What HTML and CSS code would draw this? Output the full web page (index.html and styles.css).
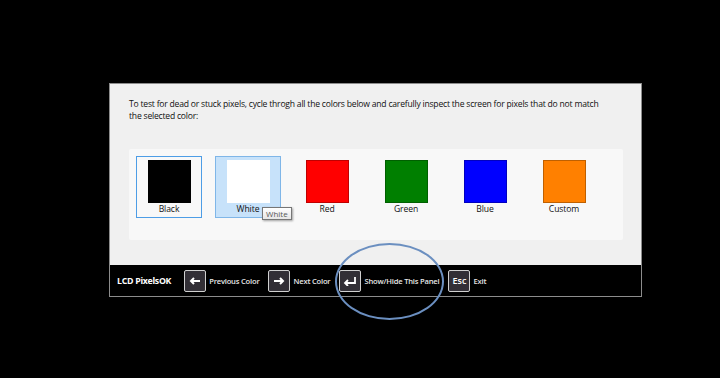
FILE: index.html
```html
<!DOCTYPE html>
<html>
<head>
    <meta charset="utf-8">
    <title>LCD PixelsOK</title>
    <link rel="stylesheet" href="styles.css">
</head>
<body>
    <div class="panel">
        <div class="content">
            <p class="intro">To test for dead or stuck pixels, cycle throgh all the colors below and carefully inspect the screen for pixels that do not match<br>the selected color:</p>
            <div class="colors">
                <div class="tile selected">
                    <div class="swatch" style="background: #000000;"></div>
                    <span>Black</span>
                </div>
                <div class="tile hover">
                    <div class="swatch" style="background: #ffffff; border-color: #ffffff;"></div>
                    <span>White</span>
                    <div class="tooltip">White</div>
                </div>
                <div class="tile">
                    <div class="swatch" style="background: #ff0000;"></div>
                    <span>Red</span>
                </div>
                <div class="tile">
                    <div class="swatch" style="background: #007f00;"></div>
                    <span>Green</span>
                </div>
                <div class="tile">
                    <div class="swatch" style="background: #0000ff;"></div>
                    <span>Blue</span>
                </div>
                <div class="tile">
                    <div class="swatch" style="background: #ff8000;"></div>
                    <span>Custom</span>
                </div>
            </div>
        </div>
        <div class="bar">
            <strong class="title">LCD PixelsOK</strong>
            <span class="key">
                <svg width="12" height="8" viewBox="0 0 12 8"><path d="M2 4 H11 M5 1 L2 4 L5 7" fill="none" stroke="#fff" stroke-width="2"/></svg>
            </span><span class="label">Previous Color</span>
            <span class="key">
                <svg width="12" height="8" viewBox="0 0 12 8"><path d="M1 4 H10 M7 1 L10 4 L7 7" fill="none" stroke="#fff" stroke-width="2"/></svg>
            </span><span class="label">Next Color</span>
            <span class="key">
                <svg width="14" height="10" viewBox="0 0 14 10"><path d="M12 1 V7 H2 M5 4 L2 7 L5 10" fill="none" stroke="#fff" stroke-width="1.8"/></svg>
            </span><span class="label">Show/Hide This Panel</span>
            <span class="key esc">Esc</span><span class="label">Exit</span>
        </div>
    </div>
    <div class="ring"></div>
</body>
</html>
```

FILE: styles.css
```css
body
{
	margin: 0;
	background-color: #000;
	font-family: "Open Sans", "Noto Sans", sans-serif;
	width: 720px;
	height: 378px;
	position: relative;
	overflow: hidden;
}

div.panel
{
	margin: 83px 0 0 109px;
	width: 531px;
	border: 1px solid #8c8c8c;
	background-color: #f0f0f0;
}

div.content
{
	height: 181px;
	padding: 14px 16px 0 19px;
	box-sizing: border-box;
}

p.intro
{
	margin: 0;
	font-size: 8.6px;
	line-height: 12px;
	letter-spacing: -0.22px;
	white-space: nowrap;
	color: #111;
}

div.colors
{
	margin-top: 27px;
	width: 494px;
	height: 91px;
	background-color: #f8f8f8;
	border-radius: 2px;
	padding: 7px;
	box-sizing: border-box;
	display: flex;
	gap: 13px;
}

div.tile
{
	position: relative;
	width: 66px;
	height: 62px;
	box-sizing: border-box;
	border: 1px solid transparent;
	padding-top: 3px;
	display: flex;
	flex-direction: column;
	align-items: center;
}

div.tile.selected
{
	border-color: #4d9de6;
}

div.tile.hover
{
	background-color: #c7e2fa;
	border-color: #7fb6e8;
}

div.swatch
{
	width: 43px;
	height: 43px;
	box-sizing: border-box;
	border: 1px solid rgba(0, 0, 0, 0.25);
}

div.tile span
{
	font-size: 8.6px;
	line-height: 12px;
	letter-spacing: -0.1px;
	color: #111;
}

div.tooltip
{
	position: absolute;
	left: 46px;
	top: 50px;
	padding: 0 3px;
	height: 13px;
	line-height: 12px;
	font-size: 8px;
	color: #575757;
	background: linear-gradient(#ffffff, #e6e6e6);
	border: 1px solid #767676;
	box-sizing: border-box;
	box-shadow: 1px 1px 2px rgba(0, 0, 0, 0.35);
	z-index: 2;
}

div.bar
{
	height: 31px;
	background-color: #000;
	display: flex;
	align-items: center;
	padding-left: 7px;
	color: #e6e6e6;
}

strong.title
{
	font-size: 8.8px;
	font-weight: 700;
	letter-spacing: -0.3px;
	color: #fff;
	margin-right: 13px;
}

span.key
{
	width: 22px;
	height: 22px;
	box-sizing: border-box;
	border: 1px solid #d0d0d0;
	border-radius: 2px;
	background-color: #322f36;
	color: #fff;
	margin-right: 3px;
	display: flex;
	align-items: center;
	justify-content: center;
}

span.key.esc
{
	font-size: 9px;
	font-weight: 600;
}

span.label
{
	font-size: 7.6px;
	font-weight: 600;
	letter-spacing: -0.2px;
	margin-right: 9px;
}

div.ring
{
	position: absolute;
	left: 335px;
	top: 243px;
	width: 109px;
	height: 77px;
	box-sizing: border-box;
	border: 2.5px solid #6b8fc0;
	border-radius: 50%;
}
```
